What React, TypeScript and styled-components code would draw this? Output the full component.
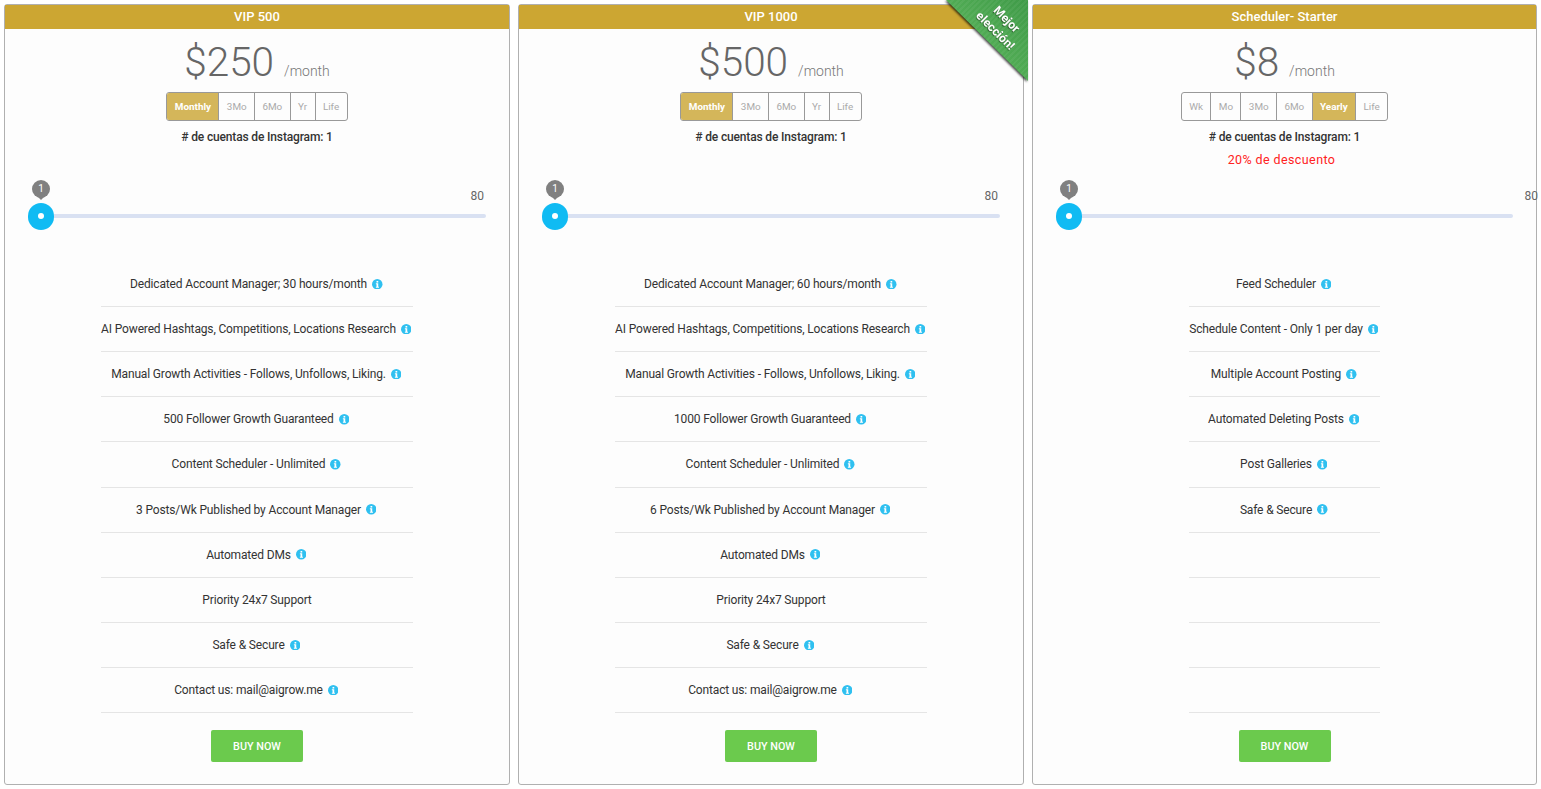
import styled, { createGlobalStyle } from 'styled-components';

const GlobalStyle = createGlobalStyle`
  html, body {
    margin: 0;
    padding: 0;
    background: #fff;
    font-family: Roboto, "Liberation Sans", sans-serif;
    overflow: hidden;
  }
`;

type Plan = {
  title: string;
  price: string;
  periods: string[];
  active: string;
  discount?: string;
  best?: boolean;
  wideLabel?: boolean;
  features: { text: string; info?: boolean }[];
};

const vip = (manager: string, growth: string, posts: string) => [
  { text: `Dedicated Account Manager; ${manager} hours/month`, info: true },
  { text: 'AI Powered Hashtags, Competitions, Locations Research', info: true },
  { text: 'Manual Growth Activities - Follows, Unfollows, Liking.', info: true },
  { text: `${growth} Follower Growth Guaranteed`, info: true },
  { text: 'Content Scheduler - Unlimited', info: true },
  { text: `${posts} Posts/Wk Published by Account Manager`, info: true },
  { text: 'Automated DMs', info: true },
  { text: 'Priority 24x7 Support' },
  { text: 'Safe & Secure', info: true },
  { text: 'Contact us: mail@aigrow.me', info: true },
];

const plans: Plan[] = [
  {
    title: 'VIP 500',
    price: '$250',
    periods: ['Monthly', '3Mo', '6Mo', 'Yr', 'Life'],
    active: 'Monthly',
    features: vip('30', '500', '3'),
  },
  {
    title: 'VIP 1000',
    price: '$500',
    periods: ['Monthly', '3Mo', '6Mo', 'Yr', 'Life'],
    active: 'Monthly',
    best: true,
    features: vip('60', '1000', '6'),
  },
  {
    title: 'Scheduler- Starter',
    price: '$8',
    periods: ['Wk', 'Mo', '3Mo', '6Mo', 'Yearly', 'Life'],
    active: 'Yearly',
    discount: '20% de descuento',
    wideLabel: true,
    features: [
      { text: 'Feed Scheduler', info: true },
      { text: 'Schedule Content - Only 1 per day', info: true },
      { text: 'Multiple Account Posting', info: true },
      { text: 'Automated Deleting Posts', info: true },
      { text: 'Post Galleries', info: true },
      { text: 'Safe & Secure', info: true },
      { text: '' },
      { text: '' },
      { text: '' },
      { text: '' },
    ],
  },
];

function InfoIcon() {
  return (
    <InfoSvg viewBox="0 0 16 16" aria-hidden="true">
      <circle cx="8" cy="8" r="8" fill="#2fc0f0" />
      <rect x="6.9" y="3" width="2.6" height="2.4" fill="#fff" />
      <path d="M5.9 6.6h3.6v5.2h1.1v1.4H5.9v-1.4h1v-3.8h-1z" fill="#fff" />
    </InfoSvg>
  );
}

function PlanCard({ plan }: { plan: Plan }) {
  return (
    <Card>
      <CardHeader>{plan.title}</CardHeader>
      {plan.best && (
        <Ribbon>
          <RibbonText>
            Mejor
            <br />
            elección!
          </RibbonText>
        </Ribbon>
      )}
      <PriceRow>
        <Price>{plan.price}</Price>
        <Per>/month</Per>
      </PriceRow>
      <Periods>
        {plan.periods.map((period) => (
          <Period key={period} $active={period === plan.active}>
            {period}
          </Period>
        ))}
      </Periods>
      <Accounts># de cuentas de Instagram: 1</Accounts>
      <Discount>{plan.discount}</Discount>
      <Slider>
        <Pin>1</Pin>
        <MaxLabel $wide={plan.wideLabel}>80</MaxLabel>
        <Track />
        <Handle />
      </Slider>
      <Features>
        {plan.features.map((feature, i) => (
          <Feature key={i}>
            {feature.text}
            {feature.info && <InfoIcon />}
          </Feature>
        ))}
      </Features>
      <BuyNow>BUY NOW</BuyNow>
    </Card>
  );
}

export default function App() {
  return (
    <Page>
      <GlobalStyle />
      {plans.map((plan) => (
        <PlanCard key={plan.title} plan={plan} />
      ))}
    </Page>
  );
}

const Page = styled.div`
  display: grid;
  grid-template-columns: 506px 506px 505px;
  column-gap: 8px;
  padding: 4px 0 0 4px;
`;

const Card = styled.div`
  position: relative;
  box-sizing: border-box;
  height: 781px;
  display: flex;
  flex-direction: column;
  align-items: center;
  background: #fdfdfd;
  border: 1px solid #b0b0b0;
  border-radius: 3px;
`;

const CardHeader = styled.div`
  align-self: stretch;
  height: 24px;
  line-height: 24px;
  background: #cca632;
  color: #fff;
  font-size: 13px;
  font-weight: 500;
  text-align: center;
`;

const Ribbon = styled.div`
  position: absolute;
  top: -5px;
  right: -5px;
  width: 82px;
  height: 81px;
  filter: drop-shadow(-1px 1px 1px rgba(0, 0, 0, 0.75));
  &::before {
    content: '';
    position: absolute;
    inset: 0;
    clip-path: polygon(0 0, 100% 0, 100% 100%);
    background:
      repeating-linear-gradient(135deg, rgba(255, 255, 255, 0.05) 0 2px, transparent 2px 4px),
      linear-gradient(45deg, #62bd60, #3f9a48);
  }
`;

const RibbonText = styled.div`
  position: absolute;
  top: 9px;
  left: 25px;
  width: 60px;
  transform: rotate(45deg);
  color: #fff;
  font-size: 12px;
  font-weight: 700;
  line-height: 16px;
  text-align: center;
  text-shadow: 0 1px 1px rgba(0, 0, 0, 0.5);
`;

const PriceRow = styled.div`
  display: flex;
  align-items: baseline;
  gap: 10px;
  height: 63px;
  padding-top: 3px;
  box-sizing: border-box;
  color: #666;
`;

const Price = styled.span`
  font-size: 40.5px;
  font-weight: 300;
  line-height: 60px;
`;

const Per = styled.span`
  font-size: 14px;
  font-weight: 300;
  color: #777;
`;

const Periods = styled.div`
  display: flex;
  height: 29px;
  box-sizing: border-box;
  border: 1px solid #999;
  border-radius: 3px;
  overflow: hidden;
`;

const Period = styled.div<{ $active?: boolean }>`
  padding: 0 7.4px;
  line-height: 27px;
  font-size: 9.9px;
  font-weight: ${(p) => (p.$active ? 700 : 400)};
  color: ${(p) => (p.$active ? '#fff' : '#aaa')};
  background: ${(p) => (p.$active ? '#d4b65a' : 'transparent')};
  border-left: 1px solid #999;
  &:first-child {
    border-left: 0;
  }
`;

const Accounts = styled.div`
  margin-top: 8px;
  height: 16px;
  line-height: 16px;
  font-size: 12px;
  letter-spacing: -0.15px;
  font-weight: 500;
  color: #333;
`;

const Discount = styled.div`
  margin-top: 7px;
  margin-right: 6px;
  height: 16px;
  line-height: 16px;
  font-size: 12.5px;
  letter-spacing: 0.4px;
  color: #f22;
`;

const Slider = styled.div`
  position: relative;
  align-self: stretch;
  height: 52px;
  margin: 12px 23px 0;
`;

const Pin = styled.div`
  position: absolute;
  top: 0;
  left: 4px;
  width: 18px;
  height: 18px;
  border-radius: 50%;
  background: #808080;
  color: #fff;
  font-size: 10px;
  line-height: 18px;
  text-align: center;
  &::after {
    content: '';
    position: absolute;
    left: 4px;
    top: 15px;
    border: 5px solid transparent;
    border-bottom: 0;
    border-top-color: #808080;
  }
`;

const MaxLabel = styled.div<{ $wide?: boolean }>`
  position: absolute;
  top: 8px;
  right: ${(p) => (p.$wide ? '-25px' : '2px')};
  font-size: 12px;
  line-height: 16px;
  color: #666;
`;

const Track = styled.div`
  position: absolute;
  top: 34px;
  left: 0;
  right: 0;
  height: 4px;
  border-radius: 2px;
  background: #d9e1f2;
`;

const Handle = styled.div`
  position: absolute;
  top: 23px;
  left: -0.3px;
  width: 26.6px;
  height: 26.6px;
  border-radius: 50%;
  background: #10bbf3;
  &::after {
    content: '';
    position: absolute;
    left: 10.3px;
    top: 10.3px;
    width: 6px;
    height: 6px;
    border-radius: 50%;
    background: #fff;
  }
`;

const Features = styled.div`
  display: flex;
  flex-direction: column;
  width: fit-content;
  margin-top: 29.8px;
`;

const Feature = styled.div`
  height: 45.15px;
  box-sizing: border-box;
  display: flex;
  align-items: center;
  justify-content: center;
  white-space: nowrap;
  border-bottom: 1px solid #e5e5e5;
  font-size: 12px;
  letter-spacing: -0.15px;
  color: #333;
`;

const InfoSvg = styled.svg`
  width: 10.5px;
  height: 10.5px;
  margin: 0 1.5px 0 5px;
`;

const BuyNow = styled.button`
  margin-top: 17.2px;
  width: 92px;
  height: 32px;
  padding: 0;
  border: 0;
  border-radius: 2px;
  background: #6bca4d;
  color: #fff;
  font-family: inherit;
  font-size: 10.8px;
  font-weight: 500;
`;
